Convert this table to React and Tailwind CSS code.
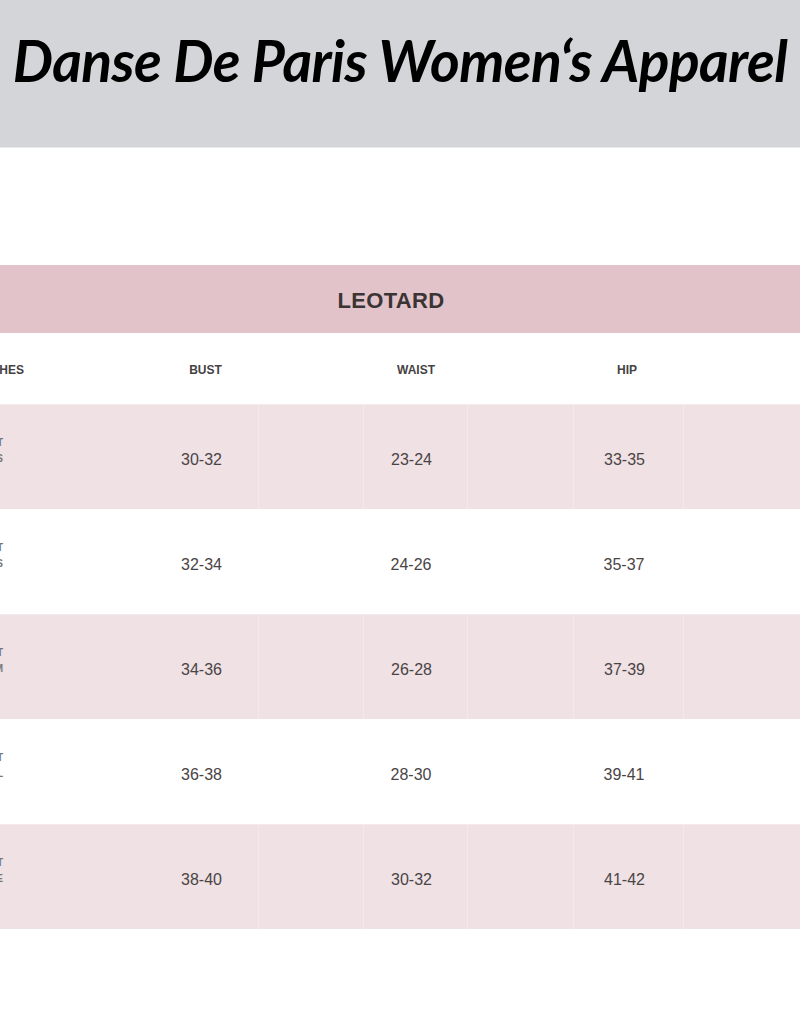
import React from "react";

const rows = [
  { label: ["ADULT", "XS"], bust: "30-32", waist: "23-24", hip: "33-35" },
  { label: ["ADULT", "S"], bust: "32-34", waist: "24-26", hip: "35-37" },
  { label: ["ADULT", "M"], bust: "34-36", waist: "26-28", hip: "37-39" },
  { label: ["ADULT", "L"], bust: "36-38", waist: "28-30", hip: "39-41" },
  { label: ["ADULT", "LARGE"], bust: "38-40", waist: "30-32", hip: "41-42" },
];

// column grid: label | bust | gap | waist | gap | hip | rest
const cols = "grid grid-cols-[153px_105px_105px_104px_106px_110px_1fr]";

const Cell = ({ children, line = false }) => (
  <div
    className={
      "flex items-center justify-center pr-2 pt-[6px] " +
      (line ? "border-l border-[#f4eaec]" : "")
    }
  >
    {children}
  </div>
);

const App = () => {
  return (
    <div
      className="w-[800px] h-[1024px] overflow-hidden bg-white"
      style={{ fontFamily: '"Liberation Sans", Arial, sans-serif' }}
    >
      <header className="h-[148px] bg-[#d4d5d8] flex items-center justify-center border-b border-[#e9e9eb]">
        <h1
          className="text-[57px] italic font-bold text-black tracking-[-0.6px] whitespace-nowrap -mt-[26px] leading-none"
          style={{ fontFamily: 'Lato, "Open Sans", sans-serif' }}
        >
          Danse De Paris Women‘s Apparel
        </h1>
      </header>

      <section className="mt-[117px]">
        <div className="h-[68px] bg-[#e2c3ca] flex items-center justify-center">
          <span className="text-[22px] font-bold text-[#3a3435] tracking-[0.3px] -ml-[18px] pt-[3px]">
            LEOTARD
          </span>
        </div>

        <div className={cols + " h-[71px] text-[12px] font-bold text-[#454243]"}>
          <div className="flex items-center pt-[3px]">
            <div className="w-[24px] flex justify-end whitespace-nowrap">INCHES</div>
          </div>
          <div className="flex items-center justify-center pt-[3px]">BUST</div>
          <div />
          <div className="flex items-center justify-center pl-[2px] pt-[3px]">WAIST</div>
          <div />
          <div className="flex items-center justify-center pr-[2px] pt-[3px]">HIP</div>
          <div />
        </div>

        {rows.map((r, i) => {
          const pink = i % 2 === 0;
          return (
            <div
              key={r.bust}
              className={
                cols +
                " h-[105px] text-[16px] text-[#4a4445] " +
                (pink ? "bg-[#efe1e4] border-t border-[#f4eaec]" : "bg-white")
              }
            >
              <div className="flex items-center">
                <div className="w-[3px] flex flex-col items-end text-[10px] font-bold leading-[16px] text-[#777] whitespace-nowrap -mt-[12px]">
                  <span>{r.label[0]}</span>
                  <span>{r.label[1]}</span>
                </div>
              </div>
              <Cell>{r.bust}</Cell>
              <Cell line={pink} />
              <Cell line={pink}>{r.waist}</Cell>
              <Cell line={pink} />
              <Cell line={pink}>{r.hip}</Cell>
              <Cell line={pink} />
            </div>
          );
        })}
      </section>
    </div>
  );
};

export default App;
